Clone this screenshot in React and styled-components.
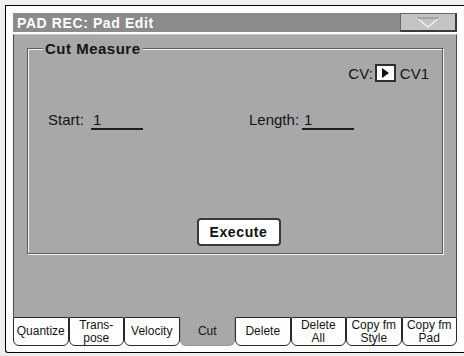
import React from "react"
import styled, { createGlobalStyle } from "styled-components"

const GlobalStyle = createGlobalStyle`
  html, body {
    margin: 0;
    padding: 0;
    overflow: hidden;
    background: #efefef;
  }
  body {
    font-family: "Liberation Sans", Arial, sans-serif;
    color: #141414;
  }
`

const Frame = styled.div`
  margin: 5px 0 0 5px;
  width: 459px;
  box-sizing: border-box;
  padding: 7px 0 6px 7px;
  background: #fdfdfd;
  border: 1px solid #000;
  border-right: none;
  border-radius: 0 0 0 3px;
`

const Display = styled.div`
  width: 444px;
  display: flex;
  flex-direction: column;
`

const TitleBar = styled.div`
  display: flex;
  height: 19px;
  background: #8b8b8b;
`

const Title = styled.div`
  flex: 1;
  padding: 1px 0 0 4px;
  color: #fff;
  font-weight: bold;
  font-size: 14px;
  line-height: 18px;
  letter-spacing: 0.6px;
`

const MenuButton = styled.div`
  width: 57px;
  box-sizing: border-box;
  background: #c4c4c4;
  border: 1px solid #666;
  border-right: 2px solid #3a3a3a;
  border-bottom: 2px solid #3a3a3a;
  display: flex;
  align-items: center;
  justify-content: center;
`

const Panel = styled.div`
  margin-top: 2px;
  height: 283px;
  box-sizing: border-box;
  background: #a8a8a8;
  border: 1px solid #4a4a4a;
  border-top-color: #c2c2c2;
  border-bottom: none;
  padding: 13px 13px 0;
`

const GroupBox = styled.div`
  height: 206px;
  box-sizing: border-box;
  border: 1px solid #5c5c5c;
  box-shadow: inset 1px 1px 0 #f4f4f4, 1px 1px 0 #f4f4f4;
  padding: 0 13px 7px 20px;
  display: flex;
  flex-direction: column;
`

const Legend = styled.div`
  align-self: flex-start;
  margin: -9px 0 0 -5px;
  padding: 0 2px;
  background: #a8a8a8;
  font-weight: bold;
  font-size: 15px;
  line-height: 17px;
  letter-spacing: 0.5px;
`

const CvRow = styled.div`
  align-self: flex-end;
  margin-top: 7px;
  height: 18px;
  display: flex;
  align-items: center;
  font-size: 15px;
`

const CvBox = styled.div`
  width: 21px;
  height: 18px;
  box-sizing: border-box;
  margin: 0 4px 0 2px;
  background: #fff;
  border: 2px solid #2e2e2e;
  display: flex;
  align-items: center;
  justify-content: center;
`

const FieldsRow = styled.div`
  margin-top: 29px;
  display: grid;
  grid-template-columns: 201px auto;
  font-size: 15px;
  line-height: 17px;
`

const Field = styled.div`
  display: flex;
`

const Label = styled.span`
  width: ${p => p.$width}px;
`

const Value = styled.span`
  width: 52px;
  box-sizing: border-box;
  padding-left: 2px;
  border-bottom: 2px solid #1e1e1e;
`

const ExecuteButton = styled.button`
  margin-top: auto;
  align-self: center;
  width: 84px;
  height: 28px;
  padding: 0;
  background: #fff;
  border: 2px solid #3a3a3a;
  border-radius: 4px;
  font-family: inherit;
  font-weight: bold;
  font-size: 14px;
  letter-spacing: 0.6px;
  color: #111;
`

const TabBar = styled.div`
  display: flex;
  height: 29px;
`

const Tab = styled.div`
  flex: 1;
  min-width: 0;
  box-sizing: border-box;
  display: flex;
  flex-direction: column;
  align-items: center;
  justify-content: center;
  text-align: center;
  font-size: 12px;
  line-height: 13px;
  white-space: nowrap;
  background: ${p => (p.$active ? "#a8a8a8" : "#fff")};
  border: 1px solid ${p => (p.$active ? "#969696" : "#2a2a2a")};
  border-top-color: ${p => (p.$active ? "#a8a8a8" : "#2a2a2a")};
  border-radius: 0 0 6px 6px;
`

const TabLine = styled.span`
  display: block;
`

const tabs = [
  ["Quantize"],
  ["Trans-", "pose"],
  ["Velocity"],
  ["Cut"],
  ["Delete"],
  ["Delete", "All"],
  ["Copy fm", "Style"],
  ["Copy fm", "Pad"],
]

export default function App() {
  return (
    <>
      <GlobalStyle />
      <Frame>
        <Display>
          <TitleBar>
            <Title>PAD REC: Pad Edit</Title>
            <MenuButton>
              <svg width="24" height="11" viewBox="0 0 24 11">
                <polygon points="1,1 23,1 12,10" fill="none" stroke="#f2f2f2" strokeWidth="1.4" />
                <line x1="1" y1="1" x2="23" y2="1" stroke="#7c7c7c" strokeWidth="1.2" />
              </svg>
            </MenuButton>
          </TitleBar>
          <Panel>
            <GroupBox>
              <Legend>Cut Measure</Legend>
              <CvRow>
                <span>CV:</span>
                <CvBox>
                  <svg width="7" height="10" viewBox="0 0 7 10">
                    <polygon points="0,0 7,5 0,10" fill="#111" />
                  </svg>
                </CvBox>
                <span>CV1</span>
              </CvRow>
              <FieldsRow>
                <Field>
                  <Label $width={43}>Start:</Label>
                  <Value>1</Value>
                </Field>
                <Field>
                  <Label $width={53}>Length:</Label>
                  <Value>1</Value>
                </Field>
              </FieldsRow>
              <ExecuteButton>Execute</ExecuteButton>
            </GroupBox>
          </Panel>
          <TabBar>
            {tabs.map((lines, i) => (
              <Tab key={i} $active={lines[0] === "Cut"}>
                {lines.map((l, j) => (
                  <TabLine key={j}>{l}</TabLine>
                ))}
              </Tab>
            ))}
          </TabBar>
        </Display>
      </Frame>
    </>
  )
}
